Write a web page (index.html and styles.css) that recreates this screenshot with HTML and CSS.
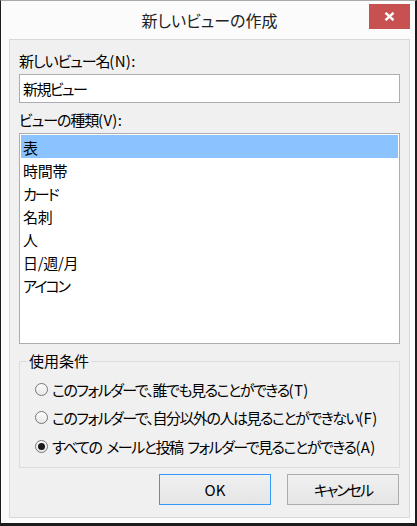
FILE: index.html
```html
<!DOCTYPE html>
<html lang="ja">
<head>
  <meta charset="UTF-8" />
  <title>新しいビューの作成</title>
  <link rel="stylesheet" href="styles.css">
</head>
<body>
  <div class="window">
    <div class="titlebar">
      <span class="title">新しいビューの作成</span>
      <button class="close" aria-label="閉じる">
        <svg width="11" height="9" viewBox="0 0 11 9">
          <path d="M1.5 0.8 L9.5 8.2 M9.5 0.8 L1.5 8.2" stroke="#fff" stroke-width="2.4" fill="none"/>
        </svg>
      </button>
    </div>

    <div class="panel">
      <label class="field-label" for="viewName">新しいビュー名<span class="latin">(N):</span></label>
      <input class="text-input" id="viewName" type="text" value="新規ビュー" />

      <label class="field-label second">ビューの種類<span class="latin">(V):</span></label>
      <ul class="listbox">
        <li class="selected">表</li>
        <li>時間帯</li>
        <li class="kana">カード</li>
        <li>名刺</li>
        <li>人</li>
        <li>日/週/月</li>
        <li class="kana">アイコン</li>
      </ul>

      <fieldset class="group">
        <legend>使用条件</legend>
        <label class="radio-row"><input type="radio" name="scope" /><span>このフォルダーで、誰でも見ることができる<span class="latin">(T)</span></span></label>
        <label class="radio-row"><input type="radio" name="scope" /><span>このフォルダーで、自分以外の人は見ることができない<span class="latin">(F)</span></span></label>
        <label class="radio-row"><input type="radio" name="scope" checked /><span>すべての メールと投稿 フォルダーで見ることができる<span class="latin">(A)</span></span></label>
      </fieldset>

      <div class="buttons">
        <button class="btn default">OK</button>
        <button class="btn kana">キャンセル</button>
      </div>
    </div>
  </div>
</body>
</html>
```

FILE: styles.css
```css
html, body {
  margin: 0;
  padding: 0;
  background: #fbfbfb;
  overflow: hidden;
}
body {
  font-family: "Noto Sans CJK JP", sans-serif;
  font-size: 15px;
  color: #000;
  font-feature-settings: "palt";
}
.latin {
  letter-spacing: 0.3px;
}
.window {
  width: 417px;
  height: 526px;
  box-sizing: border-box;
  background: #fbfbfb;
  border-left: 1px solid #1c1c1c;
  border-right: 2px solid #1c1c1c;
  border-top: 1px solid #a9a9a9;
  border-bottom: 3px solid #1c1c1c;
  padding: 0 5px 5px 8px;
}
.titlebar {
  height: 38px;
  display: grid;
  grid-template-columns: 1fr auto 1fr;
  align-items: start;
}
.title {
  grid-column: 2;
  margin-top: 9px;
  font-size: 16px;
  line-height: 20px;
  color: #222;
}
.close {
  grid-column: 3;
  justify-self: end;
  margin-top: 3px;
  width: 41px;
  height: 25px;
  border: none;
  padding: 0;
  background: #c75050;
  display: flex;
  align-items: center;
  justify-content: center;
}
.panel {
  height: 479px;
  box-sizing: border-box;
  background: #f0f0f0;
  border: 1px solid #d9d9d9;
  padding: 13px 9px 0 9px;
  display: flex;
  flex-direction: column;
}
.field-label {
  display: block;
  line-height: 15px;
  height: 15px;
  letter-spacing: -1.1px;
}
.field-label.second {
  margin-top: 9px;
}
.text-input {
  margin-top: 6px;
  height: 29px;
  box-sizing: border-box;
  border: 1px solid #abadb3;
  background: #fff;
  padding: 0 0 0 3px;
  font: inherit;
  font-size: 15px;
  letter-spacing: -1.6px;
  outline: none;
}
.listbox {
  list-style: none;
  margin: 6px 0 0 0;
  padding: 1px;
  height: 211px;
  box-sizing: border-box;
  border: 1px solid #abadb3;
  background: #fff;
}
.listbox li {
  height: 23px;
  line-height: 25px;
  padding-left: 2px;
  letter-spacing: -0.3px;
}
.listbox li.kana {
  letter-spacing: -2px;
}
.listbox li.selected {
  background: #8ac3ff;
}
.group {
  margin: 8px 0 0 0;
  padding: 5px 7px 6px 7px;
  border: 1px solid #dcdcdc;
  min-width: 0;
}
.group legend {
  padding: 0 2px;
  line-height: 18px;
  height: 18px;
}
.radio-row {
  display: flex;
  align-items: center;
  height: 28.5px;
  gap: 4px;
  white-space: pre;
  letter-spacing: -1.5px;
  word-spacing: 3px;
}
.radio-row input {
  appearance: none;
  flex: none;
  margin: 0 0 0 8px;
  width: 13px;
  height: 13px;
  border-radius: 50%;
  border: 1px solid #777;
  background: linear-gradient(#fdfdfd, #e8e8e8);
  box-sizing: border-box;
  display: grid;
  place-items: center;
}
.radio-row input:checked::after {
  content: "";
  width: 7px;
  height: 7px;
  border-radius: 50%;
  background: #1a1a1a;
}
.buttons {
  margin-top: 6px;
  margin-right: 1px;
  display: flex;
  justify-content: flex-end;
  gap: 16px;
}
.btn {
  width: 112px;
  height: 31px;
  box-sizing: border-box;
  border: 1px solid #acacac;
  background: linear-gradient(#f0f0f0, #e5e5e5);
  font: inherit;
  font-size: 15px;
  color: #000;
  padding: 0;
}
.btn.kana {
  letter-spacing: -2px;
}
.btn.default {
  border-color: #3399ff;
}
```
